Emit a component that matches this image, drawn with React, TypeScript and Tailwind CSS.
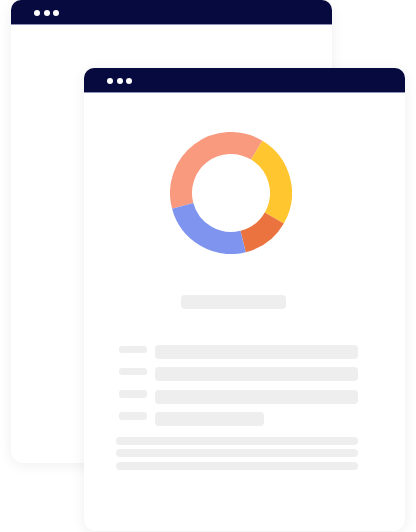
import React from "react";

function arc(cx: number, cy: number, r: number, a0: number, a1: number) {
  const p = (a: number) => {
    const rad = ((a - 90) * Math.PI) / 180;
    return [cx + r * Math.cos(rad), cy + r * Math.sin(rad)];
  };
  const [x0, y0] = p(a0);
  const [x1, y1] = p(a1);
  const large = a1 - a0 > 180 ? 1 : 0;
  return `M ${x0.toFixed(2)} ${y0.toFixed(2)} A ${r} ${r} 0 ${large} 1 ${x1.toFixed(2)} ${y1.toFixed(2)}`;
}

const segs = [
  { a0: -105, a1: 31, c: "#F99A7F" },
  { a0: 31, a1: 120, c: "#FFC62F" },
  { a0: 120, a1: 166, c: "#EB733F" },
  { a0: 166, a1: 255, c: "#7E94EE" },
];

function Header() {
  return (
    <div className="h-[25px] bg-[#070A3F] rounded-t-[10px] border-b border-[#8f92b8] flex items-center gap-[3.5px] pl-[23px] pt-[2px] shrink-0">
      <span className="w-[6px] h-[6px] rounded-full bg-white" />
      <span className="w-[6px] h-[6px] rounded-full bg-white" />
      <span className="w-[6px] h-[6px] rounded-full bg-white" />
    </div>
  );
}

function Row({ w }: { w: string }) {
  return (
    <div className="flex items-start h-[14px]">
      <div className="w-[28px] h-[7.5px] rounded-[3px] bg-[#EEEEEE] mt-[0.5px]" />
      <div className={`ml-[8px] h-[14px] rounded-[4px] bg-[#EEEEEE] ${w}`} />
    </div>
  );
}

export default function App() {
  return (
    <div className="relative w-[416px] h-[532px] bg-white overflow-hidden">
      {/* back window */}
      <div className="absolute left-[11px] top-0 w-[321px] h-[463px] bg-white rounded-[12px] shadow-[0_2px_14px_rgba(0,0,0,0.07)] flex flex-col">
        <Header />
      </div>
      {/* front window */}
      <div className="absolute left-[84px] top-[68px] w-[321px] h-[463px] bg-white rounded-[12px] shadow-[0_2px_14px_rgba(0,0,0,0.07)] flex flex-col">
        <Header />
        <div className="flex flex-col pl-[32px]">
          <svg width="122" height="122" viewBox="0 0 122 122" className="ml-[54px] mt-[39px]">
            {segs.map((s, i) => (
              <path key={i} d={arc(61, 61, 50, s.a0, s.a1)} fill="none" stroke={s.c} strokeWidth="22" />
            ))}
          </svg>
          <div className="ml-[65px] mt-[41px] w-[105px] h-[14px] rounded-[4px] bg-[#EEEEEE]" />
          <div className="ml-[3px] mt-[36px] flex flex-col gap-[8.33px]">
            <Row w="w-[203px]" />
            <Row w="w-[203px]" />
            <Row w="w-[203px]" />
            <Row w="w-[109px]" />
          </div>
          <div className="mt-[10.7px] flex flex-col gap-[4.8px]">
            <div className="w-[242px] h-[8px] rounded-full bg-[#EEEEEE]" />
            <div className="w-[242px] h-[8px] rounded-full bg-[#EEEEEE]" />
            <div className="w-[242px] h-[8px] rounded-full bg-[#EEEEEE]" />
          </div>
        </div>
      </div>
    </div>
  );
}
